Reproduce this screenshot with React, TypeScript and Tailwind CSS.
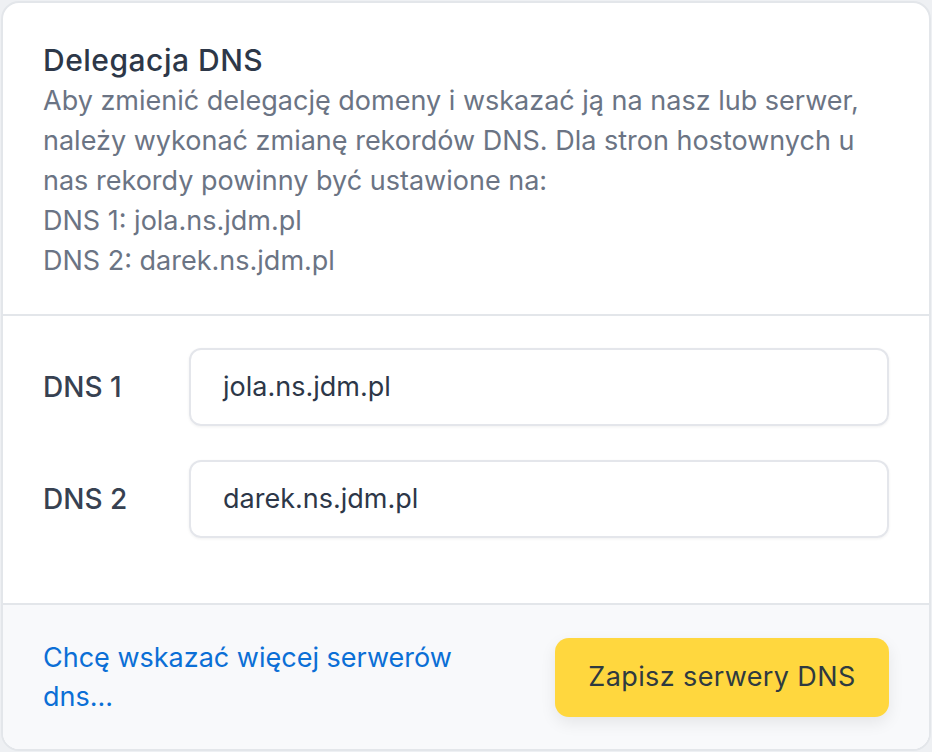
import React from "react";

export default function App() {
  return (
    <div className="w-[932px] h-[752px] bg-[#eef0f3] p-px" style={{ fontFamily: "Inter, 'Noto Sans', sans-serif" }}>
      <div className="w-full h-full bg-white border-2 border-[#e3e6ea] rounded-[18px] overflow-hidden flex flex-col">
        <div className="px-[40px] pt-[39px] pb-[33px] border-b-2 border-[#e3e6ea]">
          <h2 className="text-[30px] leading-[37px] font-medium text-[#2d3748] tracking-[0.5px]">Delegacja DNS</h2>
          <p className="mt-[2px] text-[27px] leading-[40px] text-[#6b7484]">
            Aby zmienić delegację domeny i wskazać ją na nasz lub serwer, należy wykonać zmianę rekordów DNS. Dla stron hostownych u nas rekordy powinny być ustawione na:
            <br />
            DNS 1: jola.ns.jdm.pl
            <br />
            DNS 2: darek.ns.jdm.pl
          </p>
        </div>
        <div className="flex-1 px-[40px] pt-[32px] flex flex-col gap-[34px]">
          <div className="flex items-center">
            <label className="w-[146px] text-[28px] font-medium text-[#374151]">DNS 1</label>
            <div className="flex-1 h-[78px] rounded-[12px] border-2 border-[#e4e6eb] shadow-[0_1px_3px_rgba(0,0,0,0.06)] flex items-center px-[32px] text-[27px] text-[#2d3748]">
              jola.ns.jdm.pl
            </div>
          </div>
          <div className="flex items-center">
            <label className="w-[146px] text-[28px] font-medium text-[#374151]">DNS 2</label>
            <div className="flex-1 h-[78px] rounded-[12px] border-2 border-[#e4e6eb] shadow-[0_1px_3px_rgba(0,0,0,0.06)] flex items-center px-[32px] text-[27px] text-[#2d3748]">
              darek.ns.jdm.pl
            </div>
          </div>
        </div>
        <div className="h-[146px] border-t-2 border-[#e3e6ea] bg-[#f8f9fb] px-[40px] flex items-center justify-between">
          <a className="text-[27px] leading-[39px] text-[#0b6fd6] w-[440px]">Chcę wskazać więcej serwerów dns...</a>
          <button className="w-[334px] h-[79px] rounded-[14px] bg-[#ffd73e] text-[27px] tracking-[0.4px] text-[#2f3a40] shadow-[0_6px_16px_rgba(0,0,0,0.08)]">
            Zapisz serwery DNS
          </button>
        </div>
      </div>
    </div>
  );
}
